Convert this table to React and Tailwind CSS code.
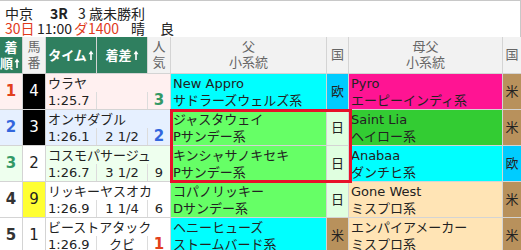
const rows = [
  { rank: '1', rankCls: 'text-[#e2401c]', rowBg: 'bg-[#fff0f0]', num: '4', numCls: 'bg-black text-white', name: 'ウラヤ', time: '1:25.7', diff: '', pop: '3', popCls: 'text-[#339966] font-bold text-[15px]', f1: 'New Appro', f2: 'サドラーズウェルズ系', fBg: 'bg-[#00ffff]', fc: '欧', fcBg: 'bg-[#00ccff]', d1: 'Pyro', d2: 'エーピーインディ系', dBg: 'bg-[#ff1493]', dc: '米', dcBg: 'bg-[#b8915c]' },
  { rank: '2', rankCls: 'text-[#3366dd]', rowBg: 'bg-[#e6f0ff]', num: '3', numCls: 'bg-black text-white', name: 'オンザダブル', time: '1:26.1', diff: '2 1/2', pop: '2', popCls: 'text-[#3366dd] font-bold text-[15px]', f1: 'ジャスタウェイ', f2: 'Pサンデー系', fBg: 'bg-[#66ff66]', fc: '日', fcBg: 'bg-[#e0ffe0]', d1: 'Saint Lia', d2: 'ヘイロー系', dBg: 'bg-[#33cc33]', dc: '米', dcBg: 'bg-[#b8915c]' },
  { rank: '3', rankCls: 'text-[#339966]', rowBg: 'bg-[#eeffee]', num: '2', numCls: 'bg-white text-[#222]', name: 'コスモパサージュ', time: '1:26.7', diff: '3 1/2', pop: '9', popCls: '', f1: 'キンシャサノキセキ', f2: 'Pサンデー系', fBg: 'bg-[#66ff66]', fc: '日', fcBg: 'bg-[#e0ffe0]', d1: 'Anabaa', d2: 'ダンチヒ系', dBg: 'bg-[#00ffff]', dc: '欧', dcBg: 'bg-[#00ccff]' },
  { rank: '4', rankCls: 'text-[#333]', rowBg: 'bg-white', num: '9', numCls: 'bg-[#ffff33] text-[#222]', name: 'リッキーヤスオカ', time: '1:26.9', diff: '1 1/4', pop: '6', popCls: '', f1: 'コパノリッキー', f2: 'Dサンデー系', fBg: 'bg-[#66ff66]', fc: '日', fcBg: 'bg-[#e0ffe0]', d1: 'Gone West', d2: 'ミスプロ系', dBg: 'bg-[#ffe4b5]', dc: '米', dcBg: 'bg-[#b8915c]' },
  { rank: '5', rankCls: 'text-[#333]', rowBg: 'bg-white', num: '1', numCls: 'bg-white text-[#222]', name: 'ビーストアタック', time: '1:26.9', diff: 'クビ', pop: '1', popCls: 'text-[#e2401c] font-bold text-[15px]', f1: 'ヘニーヒューズ', f2: 'ストームバード系', fBg: 'bg-[#00ffff]', fc: '米', fcBg: 'bg-[#b8915c]', d1: 'エンパイアメーカー', d2: 'ミスプロ系', dBg: 'bg-[#ffe4b5]', dc: '米', dcBg: 'bg-[#b8915c]' },
];

const green = 'bg-[#2f7f5f] text-white font-bold whitespace-nowrap';
const gray = 'bg-[#f2f2f2] text-[#666] whitespace-nowrap';
const jp = { fontFamily: '"Noto Sans CJK JP", sans-serif' };

function Up() {
  return (
    <svg width="6" height="11" viewBox="0 0 6 11" className="inline-block ml-[1px] align-[-1px]">
      <path d="M3 10V3" stroke="white" strokeWidth="1.6" />
      <path d="M0.5 4.2L3 0.5L5.5 4.2Z" fill="white" />
    </svg>
  );
}

export default function App() {
  return (
    <div className="w-[521px] h-[250px] overflow-hidden bg-white text-[#222]" style={{ fontFamily: '"DejaVu Sans", "Noto Sans CJK JP", sans-serif' }}>
      <div className="h-[37px] border-t border-r border-[#c8c8c8] pl-[5px] pt-[5px] text-[14px] leading-[15px]" style={jp}>
        <div className="flex h-[15px] items-center">
          <span className="w-[45px]">中京</span>
          <span className="w-[28px] font-bold">3R</span>
          <span>3 歳未勝利</span>
        </div>
        <div className="flex h-[15px] items-center">
          <span className="w-[32px] text-[#e03a1c]">30日</span>
          <span className="w-[37px]">11:00</span>
          <span className="w-[57px] text-[#e03a1c]">ダ1400</span>
          <span className="w-[29px]">晴</span>
          <span>良</span>
        </div>
      </div>
      <div className="relative grid grid-cols-[22px_22px_50px_50px_22px_155px_21px_153px_18px] gap-px bg-[#d4d4d4] text-[13px]">
        <div className={`${green} h-[36px] flex flex-col items-center justify-center leading-[16px]`} style={jp}>
          <span>着</span><span className="-ml-[2px]">順<Up /></span>
        </div>
        <div className={`${gray} flex flex-col items-center justify-center leading-[16px]`}>
          <span>馬</span><span>番</span>
        </div>
        <div className={`${green} flex items-center justify-center`} style={jp}>
          <span>タイム<Up /></span>
        </div>
        <div className={`${green} flex items-center justify-center`} style={jp}>
          <span>着差<Up /></span>
        </div>
        <div className={`${gray} flex flex-col items-center justify-center leading-[16px]`}>
          <span>人</span><span>気</span>
        </div>
        <div className={`${gray} flex flex-col items-center justify-center leading-[16px]`}>
          <span>父</span><span>小系統</span>
        </div>
        <div className={`${gray} flex items-center justify-center`}>国</div>
        <div className={`${gray} flex flex-col items-center justify-center leading-[16px]`}>
          <span>母父</span><span>小系統</span>
        </div>
        <div className={`${gray} flex items-center justify-center`}>国</div>

        {rows.map((r) => (
          <Row key={r.rank} r={r} />
        ))}

        <div className="absolute left-[170px] top-[72px] w-[182px] h-[74px] border-[3px] border-[#e8102a] pointer-events-none" />
      </div>
    </div>
  );
}

function Row({ r }) {
  return (
    <>
      <div className={`${r.rowBg} ${r.rankCls} h-[35px] flex items-center justify-center font-bold text-[15px]`}>{r.rank}</div>
      <div className={`${r.numCls} flex items-center justify-center text-[15px]`}>{r.num}</div>
      <div className={`${r.rowBg} col-span-3 flex flex-col justify-center leading-[17px]`}>
        <div className="pl-[2px] whitespace-nowrap">{r.name}</div>
        <div className="flex">
          <div className="w-[50px] pl-[2px]">{r.time}</div>
          <div className="w-[51px] border-l border-[#dcdcdc] text-center whitespace-nowrap">{r.diff}</div>
          <div className={`flex-1 border-l border-[#dcdcdc] text-center ${r.popCls}`}>{r.pop}</div>
        </div>
      </div>
      <div className={`${r.fBg} flex flex-col justify-center pl-[2px] leading-[17px] whitespace-nowrap`}>
        <span>{r.f1}</span><span>{r.f2}</span>
      </div>
      <div className={`${r.fcBg} flex items-center justify-center`}>{r.fc}</div>
      <div className={`${r.dBg} flex flex-col justify-center pl-[2px] leading-[17px] whitespace-nowrap`}>
        <span>{r.d1}</span><span>{r.d2}</span>
      </div>
      <div className={`${r.dcBg} flex items-center justify-center`}>{r.dc}</div>
    </>
  );
}
